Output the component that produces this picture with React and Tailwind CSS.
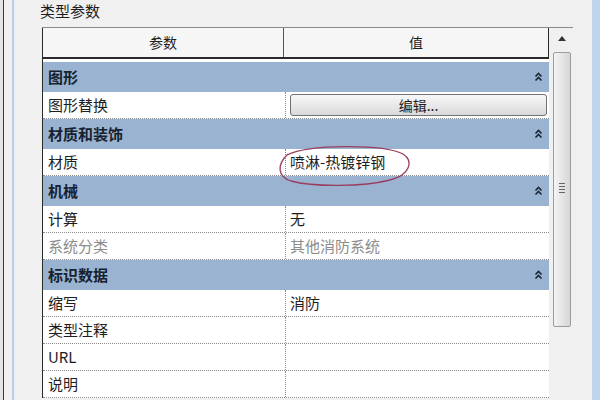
import React from 'react'

const FONT = { fontFamily: '"Noto Sans CJK SC", "Liberation Sans", sans-serif' }

function Chevrons() {
  return (
    <svg width="9" height="10" viewBox="0 0 9 10" className="mr-[6px]">
      <path d="M1.5 4.5 L4.5 1.5 L7.5 4.5" fill="none" stroke="#1b2733" strokeWidth="1.6" />
      <path d="M1.5 8.5 L4.5 5.5 L7.5 8.5" fill="none" stroke="#1b2733" strokeWidth="1.6" />
    </svg>
  )
}

function Group({ label }) {
  return (
    <div className="flex h-[30px] items-center justify-between bg-[#99b3d1] pl-[5px] text-[15px] font-bold text-[#17222e]">
      <span>{label}</span>
      <Chevrons />
    </div>
  )
}

function Row({ label, value, muted, children }) {
  const color = muted ? 'text-[#8c8c8c]' : 'text-[#1e1e1e]'
  return (
    <div className={`relative flex h-[27px] border-b border-dotted border-[#8a8a8a] bg-white text-[15px] ${color}`}>
      <div className="flex w-[242px] items-center pl-[5px]">{label}</div>
      <div className="flex flex-1 items-center border-l border-dotted border-[#8a8a8a] pl-[4px]">
        {children || value}
      </div>
    </div>
  )
}

function EditButton() {
  return (
    <div className="mr-[2px] flex h-[22px] w-full items-center justify-center rounded-[3px] border border-[#707070] bg-gradient-to-b from-[#f8f8f8] to-[#dadada] text-[14px] text-[#1e1e1e]">
      编辑...
    </div>
  )
}

function Scrollbar() {
  return (
    <div className="flex w-[18px] flex-col items-center">
      <div className="flex h-[22px] items-center justify-center pb-[2px]">
        <svg width="8" height="5" viewBox="0 0 8 5">
          <path d="M0 5 L4 0 L8 5 Z" fill="#333" />
        </svg>
      </div>
      <div className="mt-[2px] flex h-[275px] w-[18px] flex-col items-center justify-center rounded-[2px] border border-[#9c9c9c] bg-gradient-to-r from-[#f4f4f4] to-[#d6d6d6]">
        <div className="mt-[-4px] flex flex-col gap-[2px]">
          <div className="h-[1px] w-[6px] bg-[#666]" />
          <div className="h-[1px] w-[6px] bg-[#666]" />
          <div className="h-[1px] w-[6px] bg-[#666]" />
          <div className="h-[1px] w-[6px] bg-[#666]" />
        </div>
      </div>
    </div>
  )
}

export default function App() {
  return (
    <div className="flex h-[400px] w-[600px] overflow-hidden bg-[#f0f0f0]" style={FONT}>
      <div className="w-[3px] bg-[#e4e4e4]" />
      <div className="w-[1px] bg-[#3a3a3a]" />
      <div className="w-[8px]" />
      <div className="w-[2px] bg-[#b8cfe8]" />
      <div className="w-[26px]" />

      <div className="flex w-[552px] flex-col">
        <div className="h-[27px] text-[15px] leading-[22px] text-[#1e1e1e]">类型参数</div>

        <div className="ml-[2px] flex w-[531px] border-t border-[#8a8a8a]">
          <div className="flex w-[507px] flex-col">
            <div className="flex h-[31px] border-x border-b-2 border-[#2a2a2a] bg-[#f6f6f6] text-[14px] text-[#1e1e1e]">
              <div className="flex w-[241px] items-center justify-center border-r border-[#555]">参数</div>
              <div className="flex flex-1 items-center justify-center">值</div>
            </div>
            <div className="flex flex-col border-l border-[#2a2a2a] bg-white pt-[3px]">
              <Group label="图形" />
              <Row label="图形替换">
                <EditButton />
              </Row>
              <Group label="材质和装饰" />
              <Row label="材质">
                <span>喷淋-热镀锌钢</span>
                <svg
                  className="pointer-events-none absolute left-[234px] top-[-4px]"
                  width="136"
                  height="42"
                  viewBox="0 0 136 42"
                >
                  <path
                    d="M10 10 C32 -1 106 -1 126 9 C137 16 133 30 113 35 C86 42 36 42 14 36 C1 32 -1 20 11 9"
                    fill="none"
                    stroke="#9b3d5e"
                    strokeWidth="1.3"
                  />
                </svg>
              </Row>
              <Group label="机械" />
              <Row label="计算" value="无" />
              <Row label="系统分类" value="其他消防系统" muted />
              <Group label="标识数据" />
              <Row label="缩写" value="消防" />
              <Row label="类型注释" value="" />
              <Row label="URL" value="" />
              <Row label="说明" value="" />
            </div>
          </div>
          <div className="w-[4px]" />
          <Scrollbar />
          <div className="w-[2px]" />
        </div>
      </div>

      <div className="w-[8px] bg-[#bfd5ee]" />
    </div>
  )
}
